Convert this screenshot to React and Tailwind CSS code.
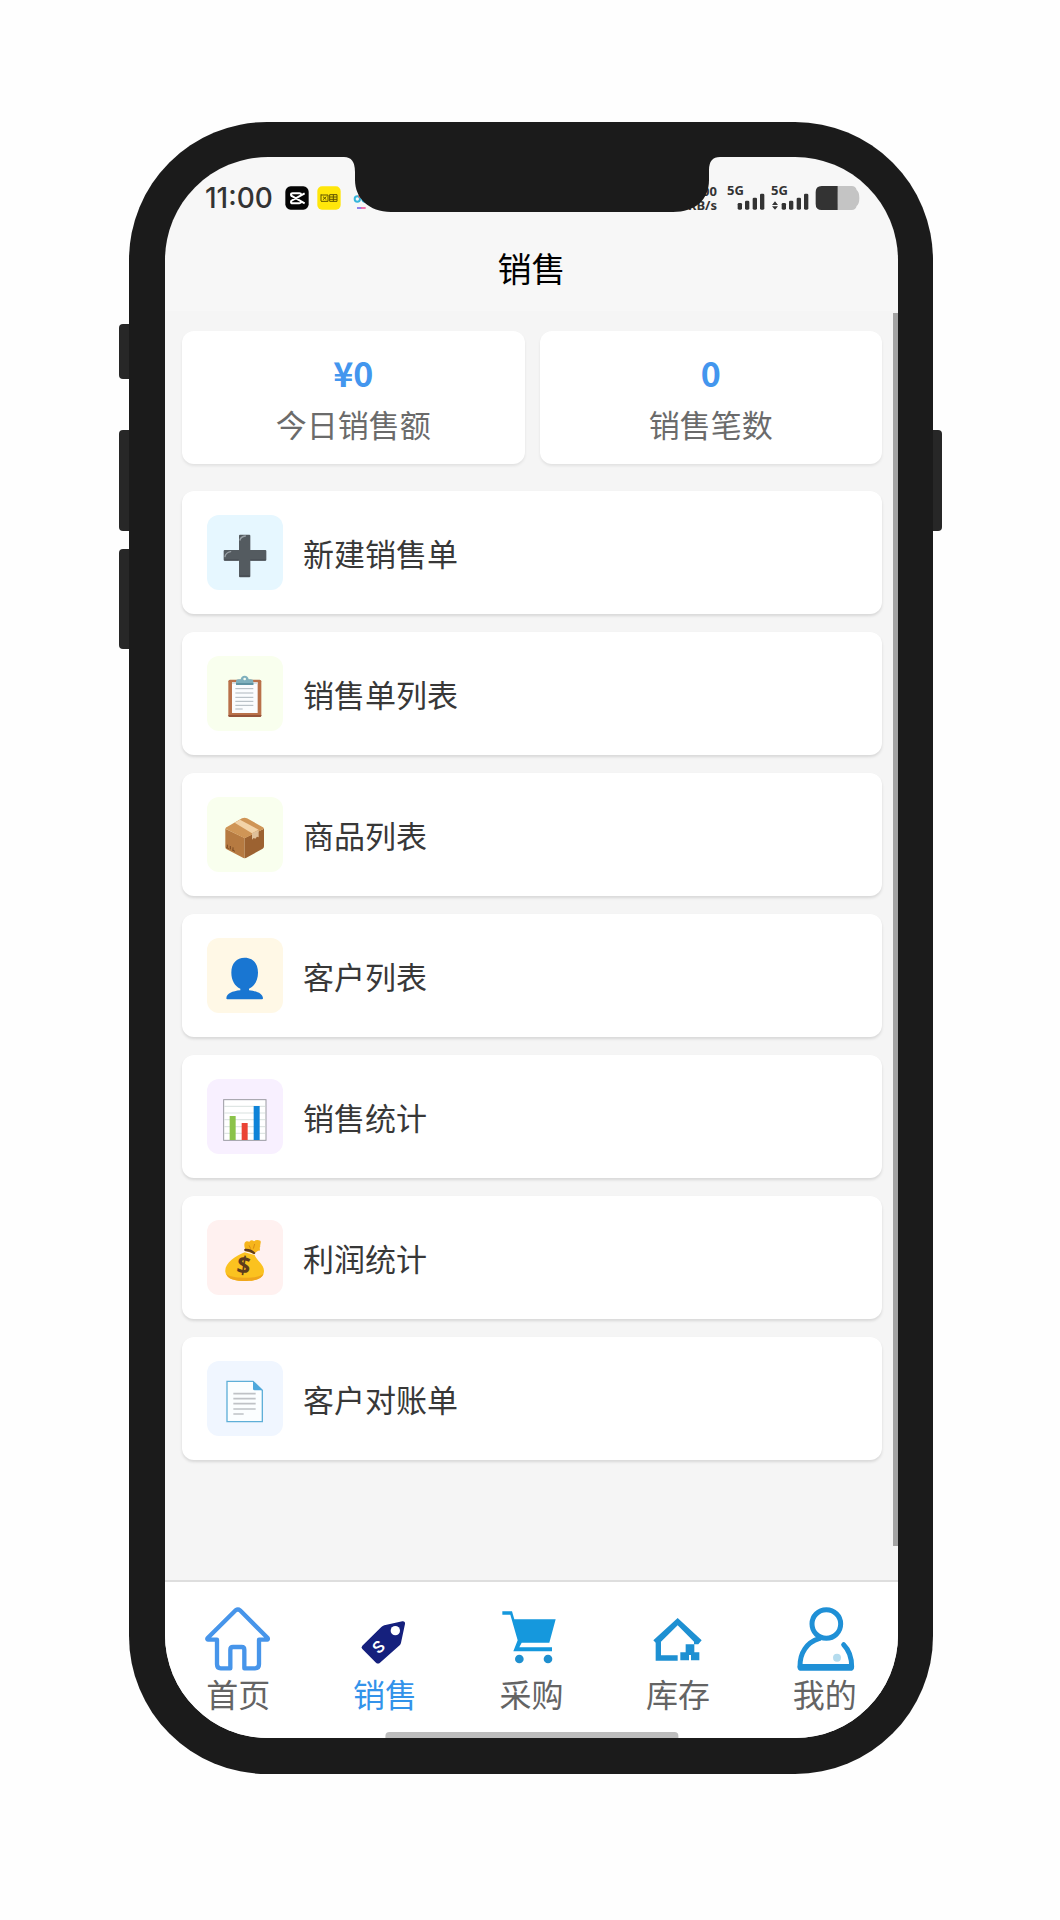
const FONT = "font-['Noto_Sans_CJK_SC','Noto_Sans',sans-serif]";

/* ---------- Menu illustrations ---------- */

function PlusIcon() {
  return (
    <svg viewBox="338 704 132 132" className="size-11" aria-hidden="true">
      <path d="M389 706h28q3 0 3 3v43h45q3 0 3 3v26q0 3-3 3h-45v47q0 3-3 3h-28q-3 0-3-3v-47h-43q-3 0-3-3v-26q0-3 3-3h43v-43q0-3 3-3z" fill="#545b60" />
      <path d="M389 722q2-10 16-12M344 772q2-12 17-15" stroke="#9aa1a6" strokeWidth="4" strokeLinecap="round" fill="none" />
      <path d="M388 830h30M342 782h43M420 782h46" stroke="#42494e" strokeWidth="3" />
    </svg>
  );
}

function ClipboardIcon() {
  return (
    <svg viewBox="159 166 132 132" className="size-11" aria-hidden="true">
      <rect x="175" y="180" width="99" height="112" rx="5" fill="#b9714a" />
      <path d="M175 286h99v2q0 4-5 4h-89q-5 0-5-4z" fill="#96543a" />
      <path d="M186 188h77v92h-77z" fill="#fbfcfe" />
      <path d="M186 188h77v5h-77z" fill="#d9e2e8" />
      <path d="M196 207h54M196 220h54M196 233h54M196 245h54M196 257h54M196 268h22" stroke="#aeb6bd" strokeWidth="3" />
      <path d="M198 195v-9q0-7 8-7h6q2-11 12-11t12 11h6q8 0 8 7v9z" fill="#7fb0bd" />
      <circle cx="224" cy="178" r="4" fill="#f4fbf0" />
      <path d="M198 190h52v6h-52z" fill="#5f93a3" />
    </svg>
  );
}

function BoxIcon() {
  return (
    <svg viewBox="159 588 132 132" className="size-11" aria-hidden="true">
      <path d="M166 626l58 28v61q-4 0-8-3l-46-24q-4-2-4-7z" fill="#b67a41" />
      <path d="M282 626l-58 28v61q4 0 8-3l46-26q4-2 4-7z" fill="#9c6231" />
      <path d="M166 626q1-4 6-6l44-25q8-4 15 0l45 25q5 2 6 6l-58 29z" fill="#cf9556" />
      <path d="M194 608l16-9 56 30-20 11z" fill="#f2d3a8" />
      <path d="M246 640l20-10v22l-5-2-5 6-5-2-5 5z" fill="#dfc09a" />
      <path d="M172 674v9M181 678v10M189 682v10M169 682l7 4M187 690l8 4" stroke="#7a4a22" strokeWidth="3" />
    </svg>
  );
}

function PersonIcon() {
  return (
    <svg viewBox="159 140 132 132" className="size-11" aria-hidden="true">
      <path d="M224 142c24 0 40 16 40 45 0 23-11 41-27 48v5c24 2 41 10 42 24q0 3-3 3H172q-3 0-3-3c1-14 18-22 42-24v-5c-16-7-27-25-27-48 0-29 16-45 40-45z" fill="#1976d2" />
    </svg>
  );
}

function ChartIcon() {
  return (
    <svg viewBox="159 562 132 132" className="size-11" aria-hidden="true">
      <rect x="161" y="567" width="127" height="122" fill="#fff" stroke="#9a9aa2" strokeWidth="3" />
      <path d="M163 587h124M163 607h124M163 627h124M163 648h124M163 668h124" stroke="#c6d2cf" strokeWidth="2" />
      <path d="M179 616h18v72h-18z" fill="#8bc34a" />
      <path d="M215 637h18v51h-18z" fill="#ea4335" />
      <path d="M251 586h18v102h-18z" fill="#0f83d8" />
    </svg>
  );
}

function MoneyBagIcon() {
  return (
    <svg viewBox="159 145 132 132" className="size-11" aria-hidden="true">
      <path d="M228 182c-3-8-7-16-4-26 5-6 9-5 14-3 5-5 9-5 14-1 6-5 12-4 19-2 4 5-2 11 0 17-3 5-1 8-1 13-6-1-11 4-17 10z" fill="#f6b51c" />
      <path d="M224 185l30 8c4 15 29 28 28 49-1 20-22 29-53 29-36 0-60-6-63-28-3-24 30-48 58-58z" fill="#fbc21f" />
      <path d="M169 250c6 17 29 21 60 21 29 0 47-8 52-22-12 9-27 12-51 12-27 0-49-1-61-11z" fill="#efa51b" />
      <path d="M226 178q15-1 26 9" stroke="#5d3b1c" strokeWidth="7" strokeLinecap="round" fill="none" />
      <path d="M237 164l5 10M254 160l-4 14" stroke="#d98c12" strokeWidth="3" />
      <text x="221" y="249" textAnchor="middle" fontSize="72" fontWeight="700" fill="#5d3b1c" transform="rotate(8 221 226)" className="font-['Noto_Sans',sans-serif]">$</text>
    </svg>
  );
}

function PageIcon() {
  return (
    <svg viewBox="159 567 132 132" className="size-11" aria-hidden="true">
      <path d="M171 571h78l28 27v94H171z" fill="#fbfeff" stroke="#5fafd8" strokeWidth="4" />
      <path d="M249 570l29 28h-24q-5 0-5-5z" fill="#4fa8dc" />
      <path d="M190 608h67M190 623h67M190 638h67M190 654h67M190 669h31" stroke="#bfc2c6" strokeWidth="5" />
    </svg>
  );
}

/* ---------- Tab bar icons ---------- */

function HomeIcon() {
  return (
    <svg viewBox="253 197 198 198" className="size-[66px]" fill="none" stroke="#4795ea" strokeWidth="13" strokeLinejoin="round" strokeLinecap="round" aria-hidden="true">
      <path d="M345 210q7-5 13 0l83 83q2 4-2 5h-24v74q0 12-12 12h-32v-56q0-8-8-8h-26q-8 0-8 8v56h-29q-11 0-11-12v-74h-26q-5-1-2-5z" />
    </svg>
  );
}

function TagIcon() {
  return (
    <svg viewBox="692 197 198 198" className="size-[66px]" aria-hidden="true">
      <path d="M723 316l57-56q4-3 9-5l54-12q9-1 8 8l-12 56q-1 5-4 8l-59 52q-6 5-12 0l-41-41q-5-5 0-10z" fill="#15207d" />
      <circle cx="822" cy="271" r="14" fill="#fff" />
      <text x="772" y="337" textAnchor="middle" fontSize="48" fontWeight="600" fill="#fff" transform="rotate(-42 772 320)" className="font-['Inter',sans-serif]">S</text>
    </svg>
  );
}

function CartIcon() {
  return (
    <svg viewBox="1134 197 198 198" className="size-[66px]" aria-hidden="true">
      <path d="M1147 213h29l7 24h124l-19 70h-83l-7 14h98v12h-116l13-33-22-77h-24z" fill="#1598dd" />
      <circle cx="1198" cy="356" r="13" fill="#1e8fcf" />
      <circle cx="1284" cy="356" r="13" fill="#1e8fcf" />
    </svg>
  );
}

function WarehouseIcon() {
  return (
    <svg viewBox="348 197 198 198" className="size-[66px]" aria-hidden="true">
      <path d="M373 300l73-67 72 67-10 12h-13v-8l-49-49-50 49v41h50v16h-66v-54z" fill="#1e90d2" />
      <path d="M470 312h26v24h15v24h-25v-16h-6v16h-26v-24h16z" fill="#1e90d2" />
    </svg>
  );
}

function ProfileIcon() {
  return (
    <svg viewBox="786 197 198 198" className="size-[66px]" fill="none" stroke="#1f90d6" strokeWidth="15" strokeLinecap="round" strokeLinejoin="round" aria-hidden="true">
      <circle cx="889" cy="251" r="43" />
      <path d="M867 295c-36 11-58 42-57 84q0 5 5 5h145q5 0 5-5c0-28-8-50-24-66" />
      <path d="M812 380h150" strokeWidth="18" />
      <circle cx="921" cy="352" r="12" fill="#b5dcee" stroke="none" />
    </svg>
  );
}

/* ---------- Status bar ---------- */

function EditorAppIcon() {
  return (
    <svg viewBox="520 224 72 72" className="size-6" aria-hidden="true">
      <rect x="521" y="225" width="70" height="70" rx="16" fill="#050505" />
      <path d="M579 246l-39 22q-2 1-2 4M579 276l-39-22q-2-1-2-4M538 250q0-4 5-4h20q5 0 6 5M538 272q0 4 5 4h20q5 0 6-5" fill="none" stroke="#fff" strokeWidth="6" />
    </svg>
  );
}

function YellowAppIcon() {
  return (
    <svg viewBox="616 224 72 72" className="size-6" aria-hidden="true">
      <rect x="617" y="225" width="70" height="70" rx="14" fill="#ffe60a" />
      <path d="M628 249v20M628 251h21v19h-21M634 256l10 9M644 256l-10 9M654 250h22v20h-22zM665 250v20M654 257h22M654 264h22" fill="none" stroke="#5f5200" strokeWidth="3" />
    </svg>
  );
}

function VideoAppIcon() {
  return (
    <svg viewBox="722 226 72 72" className="size-6" aria-hidden="true">
      <circle cx="735" cy="265" r="8" fill="none" stroke="#35b6dc" strokeWidth="6" />
      <circle cx="758" cy="265" r="8" fill="none" stroke="#35b6dc" strokeWidth="6" />
      <circle cx="744" cy="256" r="6" fill="#f0605a" />
      <path d="M734 292h13" stroke="#6a5ae8" strokeWidth="4" />
      <path d="M746 292h14" stroke="#f04a96" strokeWidth="4" />
    </svg>
  );
}

function Signal({ active }) {
  return (
    <svg viewBox="0 0 114 78" className="h-[26px] w-[38px] overflow-visible" fill="#333" aria-hidden="true">
      <text x="0" y="31" fontSize="39" fontWeight="700" className="font-['Noto_Sans',sans-serif]">5G</text>
      {active && <path d="M12 49l9 11H3zM12 74l9-10H3z" />}
      <rect x="32" y="54" width="13" height="20" rx="4" />
      <rect x="54" y="47" width="13" height="27" rx="4" />
      <rect x="77" y="38" width="13" height="36" rx="4" />
      <rect x="99" y="26" width="13" height="48" rx="4" />
    </svg>
  );
}

function Battery() {
  return (
    <svg viewBox="853 222 135 78" className="h-[26px] w-[45px]" aria-hidden="true">
      <path d="M921 225h42q12 0 15 12 8 6 8 24t-8 24q-3 12-15 12h-42z" fill="#c4c4c4" />
      <path d="M921 225h-48q-18 0-18 18v36q0 18 18 18h48z" fill="#333" />
    </svg>
  );
}

function StatusBar() {
  return (
    <div className="flex h-20 items-center justify-between pt-0.5 pr-[38px] pl-10 text-[#333]">
      <div className="flex items-center gap-2">
        <time className="mr-1 font-['Inter',sans-serif] text-[28px] leading-8 font-medium">11:00</time>
        <EditorAppIcon />
        <YellowAppIcon />
        <span className="ml-1">
          <VideoAppIcon />
        </span>
      </div>
      <div className="flex items-center gap-[6px]">
        <p className="mr-1 text-right font-['Noto_Sans',sans-serif] text-[13px] leading-[14px] font-bold">
          0.00
          <br />
          KB/s
        </p>
        <Signal />
        <Signal active />
        <Battery />
      </div>
    </div>
  );
}

function Notch() {
  return (
    <svg viewBox="339 156 384 58" className="absolute -top-px left-1/2 z-10 h-[58px] w-96 -translate-x-1/2" aria-hidden="true">
      <path d="M339 156v1h4q11 0 11 15v8c0 18 14 32 36 32h282c22 0 36-12 36-32v-10q0-13 11-13h4v-1z" fill="#1b1b1b" />
    </svg>
  );
}

/* ---------- Content ---------- */

const stats = [
  { value: "¥0", label: "今日销售额" },
  { value: "0", label: "销售笔数" },
];

const menu = [
  { label: "新建销售单", Icon: PlusIcon, tile: "bg-[#e6f7ff]" },
  { label: "销售单列表", Icon: ClipboardIcon, tile: "bg-[#f9ffee]" },
  { label: "商品列表", Icon: BoxIcon, tile: "bg-[#f9ffee]" },
  { label: "客户列表", Icon: PersonIcon, tile: "bg-[#fff8e6]" },
  { label: "销售统计", Icon: ChartIcon, tile: "bg-[#f8f0ff]" },
  { label: "利润统计", Icon: MoneyBagIcon, tile: "bg-[#fff1f0]" },
  { label: "客户对账单", Icon: PageIcon, tile: "bg-[#f0f6ff]" },
];

const tabs = [
  { label: "首页", Icon: HomeIcon },
  { label: "销售", Icon: TagIcon, current: true },
  { label: "采购", Icon: CartIcon },
  { label: "库存", Icon: WarehouseIcon },
  { label: "我的", Icon: ProfileIcon },
];

function StatCard({ value, label }) {
  return (
    <div className="flex-1 rounded-xl bg-white pt-5 pb-[19px] text-center shadow-[0_2px_3px_rgba(0,0,0,0.08)]">
      <p className="text-[34px] leading-[44px] font-bold text-[#4396ee]">{value}</p>
      <p className="mt-2 text-[31px] leading-[42px] text-[#6b6b6b]">{label}</p>
    </div>
  );
}

function MenuRow({ label, Icon, tile }) {
  return (
    <li>
      <button type="button" className="flex w-full items-center gap-5 rounded-xl bg-white p-6 pl-[25px] text-left shadow-[0_2px_3px_rgba(0,0,0,0.12)]">
        <span className={`flex h-[75px] w-[76px] items-center justify-center rounded-xl pt-1.5 ${tile}`}>
          <Icon />
        </span>
        <span className="text-[31px] leading-[42px] text-[#383838]">{label}</span>
      </button>
    </li>
  );
}

function SideButton({ className }) {
  return <span className={`absolute w-3 bg-[#272727] ${className}`} />;
}

export default function App() {
  return (
    <div className={`min-h-screen bg-[#fefefe] py-[122px] pr-[127px] pl-[129px] ${FONT}`}>
      <div className="relative">
        <SideButton className="top-[202px] -left-[10px] h-[55px] rounded-l" />
        <SideButton className="top-[308px] -left-[10px] h-[101px] rounded-l" />
        <SideButton className="top-[427px] -left-[10px] h-[100px] rounded-l" />
        <SideButton className="top-[308px] -right-[9px] h-[101px] rounded-r" />

        <div className="relative overflow-hidden rounded-[138px] bg-[#1b1b1b] p-9 pt-[35px] pr-[35px]">
          <div className="relative">
            <Notch />
            <div className="overflow-hidden rounded-[103px] bg-[#f7f7f7]">
              <header className="pb-3">
                <StatusBar />
                <h1 className="text-center text-[34px] leading-[62px] text-black">销售</h1>
              </header>

              <main className="relative bg-[#f5f5f5] pt-5 pr-4 pb-[120px] pl-[17px]">
                <div className="flex gap-[15px]">
                  {stats.map((s) => (
                    <StatCard key={s.label} {...s} />
                  ))}
                </div>
                <ul className="mt-[27px] flex flex-col gap-[18px]">
                  {menu.map((m) => (
                    <MenuRow key={m.label} {...m} />
                  ))}
                </ul>
                <div className="absolute top-0.5 right-0 bottom-[34px] w-[5px] bg-[#a3a3a3]" />
              </main>

              <nav className="relative grid grid-cols-5 border-t-2 border-[#dedede] bg-white pt-6 pb-6">
                {tabs.map(({ label, Icon, current }) => (
                  <a
                    key={label}
                    href="#"
                    aria-current={current ? "page" : undefined}
                    className={`flex flex-col items-center text-[32px] leading-[42px] ${current ? "text-[#3393ea]" : "text-[#646464]"}`}
                  >
                    <Icon />
                    {label}
                  </a>
                ))}
                <div className="absolute bottom-0 left-1/2 h-1.5 w-2/5 -translate-x-1/2 rounded-t bg-[#bdbdbd]" />
              </nav>
            </div>
          </div>
        </div>
      </div>
    </div>
  );
}
